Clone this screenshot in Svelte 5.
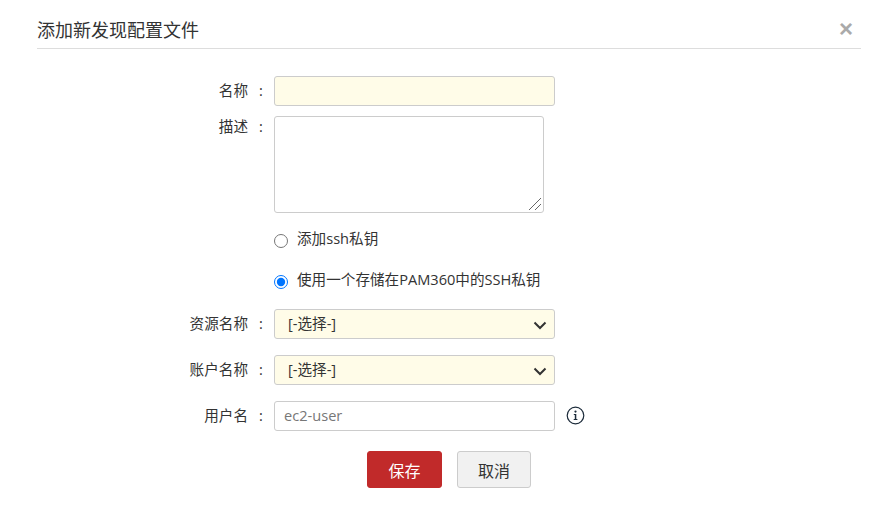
<script>
  let name = '';
  let description = '';
  let keySource = 'stored';
</script>

<div class="dialog">
  <header class="head">
    <h2>添加新发现配置文件</h2>
    <button class="close" aria-label="关闭">×</button>
  </header>

  <form class="form" on:submit|preventDefault>
    <div class="row first">
      <label for="name">名称</label>
      <span class="colon">:</span>
      <input id="name" class="field wide required" bind:value={name} />
    </div>

    <div class="row top">
      <label for="desc">描述</label>
      <span class="colon">:</span>
      <div class="area-wrap">
        <textarea id="desc" class="field area" bind:value={description}></textarea>
        <!-- 右下角のリサイズハンドル -->
        <svg class="grip" width="14" height="14" viewBox="0 0 14 14">
          <path d="M13 1L1 13M13 7L7 13" fill="none" stroke="#666" stroke-width="1"/>
        </svg>
      </div>
    </div>

    <div class="radios">
      <label class="radio">
        <input type="radio" bind:group={keySource} value="new" />
        <span>添加ssh私钥</span>
      </label>
      <label class="radio">
        <input type="radio" bind:group={keySource} value="stored" />
        <span>使用一个存储在PAM360中的SSH私钥</span>
      </label>
    </div>

    <div class="row">
      <label for="resource">资源名称</label>
      <span class="colon">:</span>
      <div class="select wide required" id="resource">
        <span>[-选择-]</span>
        <svg width="14" height="9" viewBox="0 0 14 9"><path d="M1.500 1.500l5.500 5.500 5.500-5.500" fill="none" stroke="#333" stroke-width="2"/></svg>
      </div>
    </div>

    <div class="row">
      <label for="account">账户名称</label>
      <span class="colon">:</span>
      <div class="select wide required" id="account">
        <span>[-选择-]</span>
        <svg width="14" height="9" viewBox="0 0 14 9"><path d="M1.500 1.500l5.500 5.500 5.500-5.500" fill="none" stroke="#333" stroke-width="2"/></svg>
      </div>
    </div>

    <div class="row">
      <label for="user">用户名</label>
      <span class="colon">:</span>
      <input id="user" class="field wide" placeholder="ec2-user" />
      <svg class="info" width="19" height="19" viewBox="0 0 19 19">
        <circle cx="9.500" cy="9.500" r="8.300" fill="none" stroke="#1c2b3a" stroke-width="1.200"/>
        <circle cx="9.500" cy="5.600" r="1.100" fill="#1c2b3a"/>
        <path d="M7.800 8h2.500v5h1.100v1.100H7.700V13h1.100V9.100H7.800z" fill="#1c2b3a"/>
      </svg>
    </div>

    <div class="actions">
      <button class="btn save" type="submit">保存</button>
      <button class="btn cancel" type="button">取消</button>
    </div>
  </form>
</div>

<style>
  :global(body) {
    background: #fff;
    font-family: "Open Sans", "Noto Sans CJK SC", sans-serif;
    font-size: 14.6px;
    color: #333;
  }

  .dialog {
    width: 896px;
    height: 508px;
    padding: 0 35px 0 37px;
    box-sizing: border-box;
    overflow: hidden;
  }

  .head {
    display: flex;
    align-items: center;
    justify-content: space-between;
    height: 49px;
    padding-top: 9px;
    box-sizing: border-box;
    border-bottom: 1px solid #ddd;
  }

  h2 {
    margin: 0;
    font-size: 18px;
    font-weight: 400;
    color: #333;
  }

  .close {
    border: none;
    background: none;
    padding: 0;
    width: 13px;
    margin-right: 9px;
    font-family: "Liberation Sans", sans-serif;
    font-size: 24px;
    font-weight: 700;
    line-height: 1;
    color: #aaa;
  }

  .form {
    padding-top: 27px;
  }

  .row {
    display: grid;
    grid-template-columns: 211px 26px auto 1fr;
    align-items: center;
    margin-bottom: 16px;
  }

  .row.first {
    margin-bottom: 10px;
  }

  .row label,
  .row .colon {
    padding-bottom: 3px;
  }

  .row.top {
    align-items: start;
    margin-bottom: 14px;
  }

  .row.top label,
  .row.top .colon {
    line-height: 20px;
    padding-bottom: 0;
  }

  label {
    text-align: right;
  }

  .colon {
    text-align: center;
  }

  .field,
  .select {
    box-sizing: border-box;
    border: 1px solid #ccc;
    border-radius: 3px;
    font-family: inherit;
    font-size: 14.6px;
    color: #333;
    background: #fff;
    outline: none;
  }

  .wide {
    width: 281px;
    height: 30px;
  }

  .field.wide {
    padding: 0 9px 2px;
  }

  .field::placeholder {
    color: #777;
  }

  .area-wrap {
    position: relative;
    width: 270px;
    height: 97px;
  }

  .area {
    display: block;
    width: 100%;
    height: 100%;
    resize: none;
  }

  .grip {
    position: absolute;
    right: 2px;
    bottom: 2px;
  }

  .field.required,
  .select.required {
    background: #fffce8;
  }

  .select {
    display: flex;
    align-items: center;
    justify-content: space-between;
    padding: 0 7px 0 13px;
  }

  .select span {
    padding-bottom: 3px;
  }

  .select svg {
    margin-top: 2px;
  }

  .radios {
    display: flex;
    flex-direction: column;
    gap: 20px;
    margin-left: 237px;
    margin-bottom: 20px;
  }

  .radio {
    display: flex;
    align-items: center;
    gap: 9px;
    height: 21px;
    text-align: left;
  }

  .radio input {
    width: 14px;
    height: 14px;
    margin: 7px 0 0;
  }

  .info {
    margin-left: 11px;
    margin-bottom: 1px;
  }

  .actions {
    display: flex;
    gap: 15px;
    margin: 20px 0 0 330px;
  }

  .btn {
    height: 37px;
    border-radius: 3px;
    font-family: inherit;
    font-size: 16px;
    padding: 0;
  }

  .save {
    width: 75px;
    color: #fff;
    background: #c12a2a;
    border: 1px solid #c12a2a;
  }

  .cancel {
    width: 74px;
    color: #333;
    background: #f1f1f1;
    border: 1px solid #ccc;
  }
</style>
